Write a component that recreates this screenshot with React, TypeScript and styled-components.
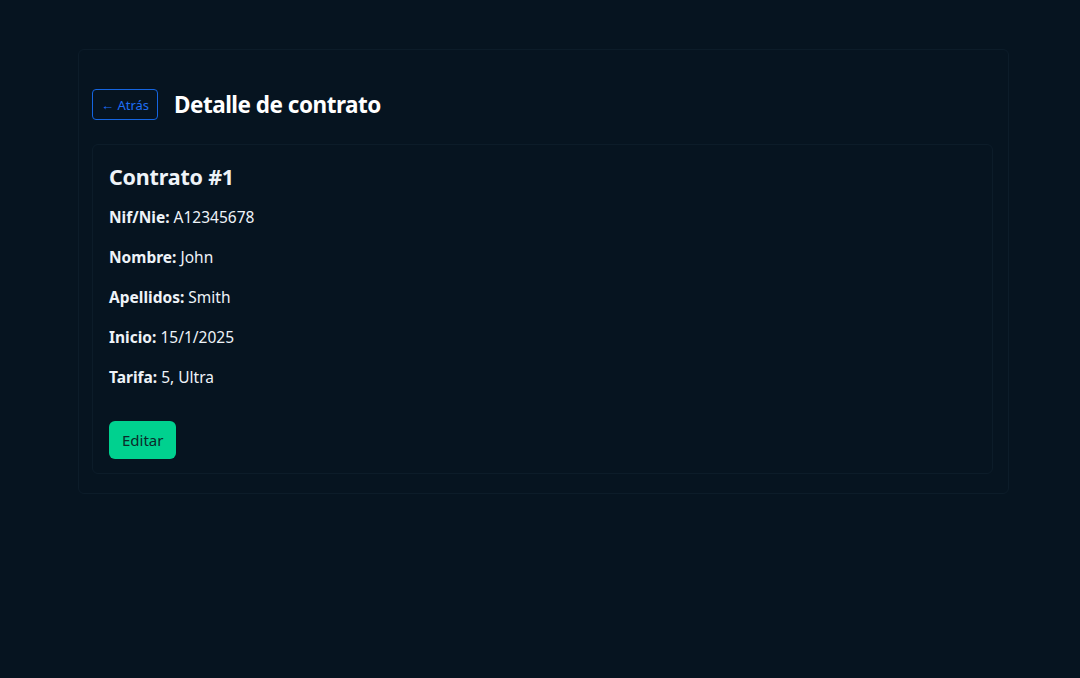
import React from "react";
import styled, { createGlobalStyle } from "styled-components";

const Global = createGlobalStyle`
  html, body { margin: 0; padding: 0; background: #061420; }
  body { font-family: "Noto Sans", "Open Sans", sans-serif; color: #f1f4f8; }
  * { box-sizing: border-box; }
`;

const Page = styled.div`
  min-height: 678px;
  padding: 49px 71px 0 78px;
`;

const Panel = styled.section`
  border: 1px solid #0c1c29;
  border-radius: 6px;
  padding: 39px 15px 19px 13px;
  display: flex;
  flex-direction: column;
  gap: 24px;
`;

const Header = styled.div`
  display: flex;
  align-items: center;
  gap: 16px;
`;

const BackButton = styled.button`
  height: 31px;
  padding: 0 8px;
  background: transparent;
  border: 1px solid #1565e0;
  border-radius: 4px;
  color: #1e6ef5;
  font-family: inherit;
  font-size: 13px;
  cursor: pointer;
`;

const Title = styled.h1`
  margin: 0;
  font-size: 22.5px;
  letter-spacing: -0.5px;
  font-weight: 700;
  color: #ffffff;
`;

const Card = styled.div`
  border: 1px solid #0c1c29;
  border-radius: 6px;
  padding: 16px 16px 14px 16px;
`;

const CardTitle = styled.h2`
  margin: 0 0 12px;
  font-size: 21.5px;
  letter-spacing: -0.2px;
  font-weight: 700;
  line-height: 32px;
  color: #eef3f8;
`;

const Field = styled.p`
  margin: 0 0 16px;
  font-size: 15.5px;
  line-height: 24px;
  color: #eef3f8;
`;

const Label = styled.strong`
  font-weight: 700;
`;

const EditButton = styled.button`
  margin-top: 16px;
  height: 38px;
  padding: 0 13px;
  background: #00d18f;
  border: none;
  border-radius: 6px;
  color: #0b2a2a;
  font-family: inherit;
  font-size: 15px;
  cursor: pointer;
`;

const fields: [string, string][] = [
  ["Nif/Nie:", "A12345678"],
  ["Nombre:", "John"],
  ["Apellidos:", "Smith"],
  ["Inicio:", "15/1/2025"],
  ["Tarifa:", "5, Ultra"],
];

export default function App() {
  return (
    <>
      <Global />
      <Page>
        <Panel>
          <Header>
            <BackButton>← Atrás</BackButton>
            <Title>Detalle de contrato</Title>
          </Header>
          <Card>
            <CardTitle>Contrato #1</CardTitle>
            {fields.map(([l, v]) => (
              <Field key={l}>
                <Label>{l}</Label> {v}
              </Field>
            ))}
            <EditButton>Editar</EditButton>
          </Card>
        </Panel>
      </Page>
    </>
  );
}
